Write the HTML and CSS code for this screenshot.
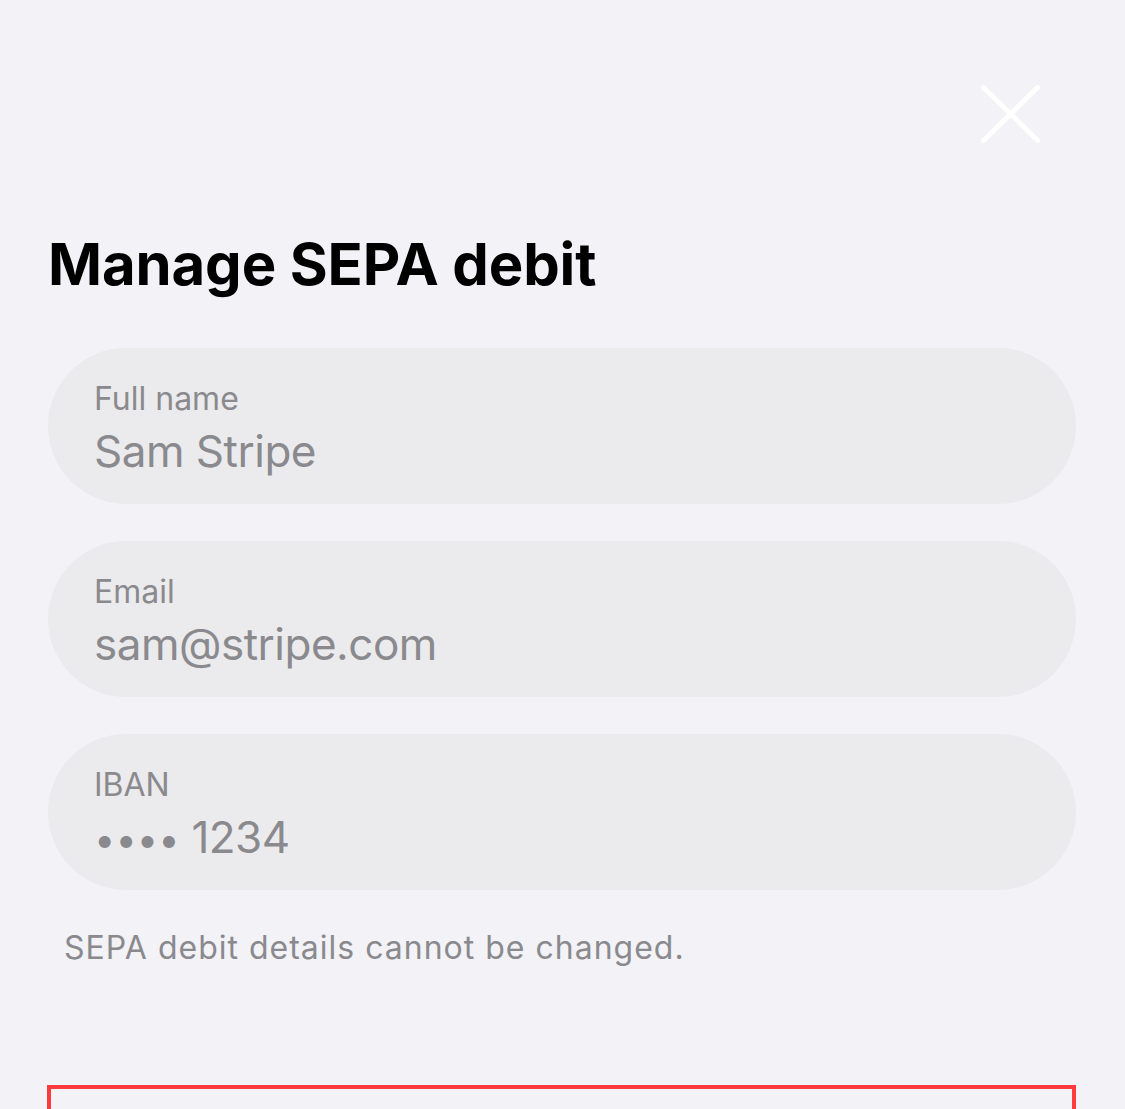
FILE: index.html
```html
<!DOCTYPE html>
<html lang="en">
<head>
<meta charset="utf-8">
<title>Manage SEPA debit</title>
<link rel="stylesheet" href="styles.css">
</head>
<body>
<div class="sheet">
  <div class="close-row">
    <svg class="close" width="59" height="58" viewBox="0 0 59 58" aria-label="Close">
      <line x1="2.5" y1="2.5" x2="56.5" y2="55.5" stroke="#ffffff" stroke-width="5" stroke-linecap="round"/>
      <line x1="56.5" y1="2.5" x2="2.5" y2="55.5" stroke="#ffffff" stroke-width="5" stroke-linecap="round"/>
    </svg>
  </div>
  <h1 class="title">Manage SEPA debit</h1>
  <div class="fields">
    <div class="field">
      <div class="label">Full name</div>
      <div class="value">Sam Stripe</div>
    </div>
    <div class="field">
      <div class="label">Email</div>
      <div class="value">sam@stripe.com</div>
    </div>
    <div class="field">
      <div class="label">IBAN</div>
      <div class="value"><span class="dots">••••</span> 1234</div>
    </div>
  </div>
  <p class="note">SEPA debit details cannot be changed.</p>
  <div class="remove-box"></div>
</div>
</body>
</html>
```
FILE: styles.css
```css
html, body {
  margin: 0;
  padding: 0;
  background: #f2f2f7;
  height: 100%;
  overflow: hidden;
}
body {
  font-family: Inter, "Liberation Sans", sans-serif;
  color: #000;
}
.sheet {
  padding: 0 49px 0 48px;
}
.close-row {
  display: flex;
  justify-content: flex-end;
  padding-top: 85px;
  margin-right: 36px;
}
.close {
  display: block;
}
.title {
  margin: 86px 0 0 0;
  font-size: 58px;
  line-height: 70px;
  font-weight: 700;
  letter-spacing: -0.1px;
}
.fields {
  margin-top: 49px;
  display: flex;
  flex-direction: column;
  gap: 37px;
}
.field {
  height: 156px;
  box-sizing: border-box;
  border-radius: 78px;
  background: #ebebed;
  padding: 32px 0 0 46px;
  display: flex;
  flex-direction: column;
  gap: 5px;
}
.label {
  font-size: 32px;
  line-height: 38px;
  color: #8a8a8e;
}
.value {
  font-size: 44px;
  line-height: 56px;
  letter-spacing: -0.5px;
  color: #8a8a8e;
}
.dots {
  font-size: 38px;
  letter-spacing: 0;
}
.note {
  margin: 39px 0 0 16px;
  font-size: 32px;
  line-height: 38px;
  color: #8a8a8e;
  letter-spacing: 1px;
}
.remove-box {
  margin: 118px 0 0 -1px;
  height: 200px;
  border: 4px solid #ff3b3f;
}
```
